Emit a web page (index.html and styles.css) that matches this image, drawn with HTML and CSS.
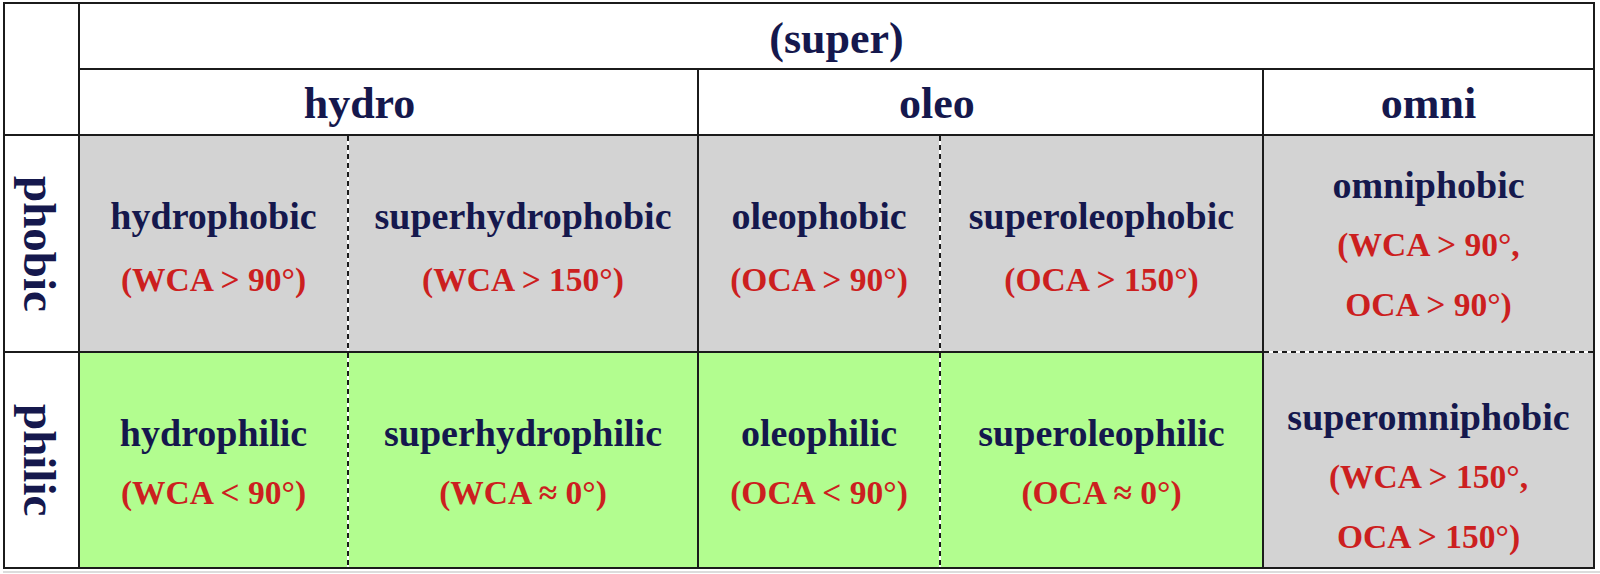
FILE: index.html
```html
<!DOCTYPE html>
<html lang="en">
<head>
<meta charset="utf-8">
<title>Wettability terminology</title>
<link rel="stylesheet" href="styles.css">
</head>
<body>
<div class="sheet">
  <div class="grid">
    <div class="corner"></div>
    <div class="head super">(super)</div>
    <div class="head sub hydro">hydro</div>
    <div class="head sub oleo">oleo</div>
    <div class="head sub">omni</div>

    <div class="side"><span class="vlabel">phobic</span></div>
    <div class="pair gray">
      <div class="cell phobic w-hydro"><span class="term">hydrophobic</span><span class="crit">(WCA &gt; 90°)</span></div>
      <div class="vdash"></div>
      <div class="cell phobic grow"><span class="term">superhydrophobic</span><span class="crit">(WCA &gt; 150°)</span></div>
    </div>
    <div class="pair gray">
      <div class="cell phobic w-oleo"><span class="term">oleophobic</span><span class="crit">(OCA &gt; 90°)</span></div>
      <div class="vdash"></div>
      <div class="cell phobic grow"><span class="term">superoleophobic</span><span class="crit">(OCA &gt; 150°)</span></div>
    </div>
    <div class="omni gray">
      <div class="cell omni-top"><span class="term">omniphobic</span><span class="crit">(WCA &gt; 90°,</span><span class="crit">OCA &gt; 90°)</span></div>
      <div class="hdash"></div>
      <div class="cell omni-bottom"><span class="term">superomniphobic</span><span class="crit">(WCA &gt; 150°,</span><span class="crit">OCA &gt; 150°)</span></div>
    </div>

    <div class="side"><span class="vlabel">philic</span></div>
    <div class="pair green">
      <div class="cell philic w-hydro"><span class="term">hydrophilic</span><span class="crit">(WCA &lt; 90°)</span></div>
      <div class="vdash"></div>
      <div class="cell philic grow"><span class="term">superhydrophilic</span><span class="crit">(WCA ≈ 0°)</span></div>
    </div>
    <div class="pair green">
      <div class="cell philic w-oleo"><span class="term">oleophilic</span><span class="crit">(OCA &lt; 90°)</span></div>
      <div class="vdash"></div>
      <div class="cell philic grow"><span class="term">superoleophilic</span><span class="crit">(OCA ≈ 0°)</span></div>
    </div>
  </div>
  <div class="edge"></div>
</div>
</body>
</html>
```

FILE: styles.css
```css
html, body {
  margin: 0;
  padding: 0;
  background: #ffffff;
}

body {
  font-family: "Liberation Serif", "Times New Roman", serif;
  font-weight: bold;
  color: #15184d;
}

.sheet {
  padding: 2px 0 0 3px;
  width: 1597px;
}

.grid {
  display: grid;
  grid-template-columns: 73px 617px 563px 329px;
  grid-template-rows: 64px 64px 215px 214px;
  gap: 2px;
  padding: 2px;
  width: 1592px;
  box-sizing: border-box;
  background: #1b1b1b;
}

.corner {
  grid-row: 1 / 3;
  grid-column: 1;
  background: #ffffff;
}

.head {
  background: #ffffff;
  display: flex;
  align-items: center;
  justify-content: center;
  font-size: 44px;
  line-height: 64px;
}

.head.super {
  grid-column: 2 / 5;
  padding-top: 6px;
}

.head.sub {
  padding-top: 4px;
}

.head.hydro { padding-right: 58px; }
.head.oleo { padding-right: 87px; }

.side {
  background: #ffffff;
  display: flex;
  align-items: center;
  justify-content: center;
}

.vlabel {
  writing-mode: vertical-rl;
  font-size: 47px;
  line-height: 1;
  margin-right: 4px;
}

.gray { background: #d3d3d3; }
.green { background: #b2fd8f; }

.pair {
  display: flex;
}

.cell {
  display: flex;
  flex-direction: column;
  align-items: center;
  justify-content: center;
  white-space: nowrap;
}

.w-hydro { width: 267px; }
.w-oleo { width: 240px; }
.grow { flex: 1; }

.term {
  font-size: 38px;
  color: #15184d;
}

.crit {
  font-size: 33.5px;
  color: #cc1f1f;
}

.phobic .term, .phobic .crit { line-height: 64px; }
.phobic { padding-top: 8px; }

.philic .term, .philic .crit { line-height: 60px; }
.philic { padding-top: 6px; }

.omni {
  grid-column: 4;
  grid-row: 3 / 5;
  display: flex;
  flex-direction: column;
}

.omni-top { height: 215px; padding-top: 2px; box-sizing: border-box; }
.omni-bottom { flex: 1; padding-top: 34px; box-sizing: border-box; }
.omni .term, .omni .crit { line-height: 60px; }

.vdash {
  width: 2px;
  flex: none;
  background: repeating-linear-gradient(to bottom, #1b1b1b 0 5px, #ffffff 5px 9px);
}

.hdash {
  height: 2px;
  flex: none;
  background: repeating-linear-gradient(to right, #1b1b1b 0 5px, #ffffff 5px 9px);
}

.edge {
  margin-top: 2px;
  height: 0;
  border-top: 2px solid #dcdcdc;
}
```
